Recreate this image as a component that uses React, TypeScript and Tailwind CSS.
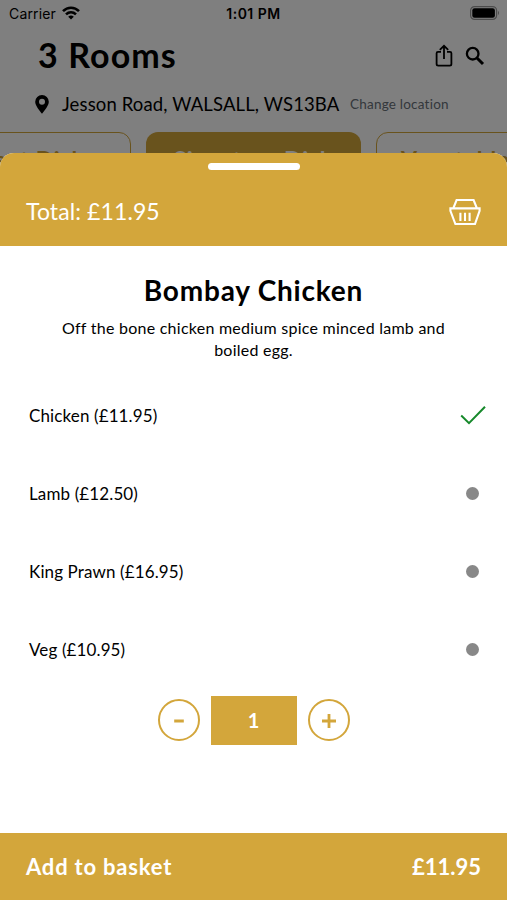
import React, { useState } from 'react'

interface Option {
  name: string
  price: string
}

const options: Option[] = [
  { name: 'Chicken', price: '11.95' },
  { name: 'Lamb', price: '12.50' },
  { name: 'King Prawn', price: '16.95' },
  { name: 'Veg', price: '10.95' },
]

const StatusBar = () => (
  <div className="flex h-7 items-center px-[9px] font-['Inter',sans-serif] text-[14px] leading-none">
    <div className="flex flex-1 items-center gap-[6px]">
      <span className="tracking-[0.15px]">Carrier</span>
      <svg className="-mt-[2px]" width="18" height="14" viewBox="0 0 18 14" fill="none" stroke="#000" strokeWidth="2.6">
        <path d="M1 5.2C5.6 .6 12.4 .6 17 5.2" />
        <path d="M4 8.4C6.9 5.7 11.1 5.7 14 8.4" />
        <path d="M9 13.6 6.2 10.8Q9 8.4 11.8 10.8Z" fill="#000" stroke="none" />
      </svg>
    </div>
    <span className="font-semibold tracking-[0.5px]">1:01 PM</span>
    <div className="flex flex-1 justify-end">
      <svg className="-mr-[2px] -mt-[2px]" width="30" height="14" viewBox="0 0 30 14">
        <rect x=".6" y=".6" width="26" height="12.8" rx="4" fill="none" stroke="#000" strokeOpacity=".4" strokeWidth="1.2" />
        <rect x="2.3" y="2.3" width="22.6" height="9.4" rx="2.2" />
        <path d="M28 4.8Q30 7 28 9.2Z" opacity=".4" />
      </svg>
    </div>
  </div>
)

const Header = () => (
  <div className="flex h-[55px] items-center pl-[38px] pr-[22px]">
    <h1 className="flex-1 pb-[2px] text-[34px] font-bold leading-none tracking-[1.1px]">3 Rooms</h1>
    <svg className="mr-[12px]" width="18" height="24" viewBox="0 0 18 24" fill="none" stroke="#000" strokeWidth="1.8">
      <path d="M6 7.8H3Q1.6 7.8 1.6 9.2V20Q1.6 21.6 3.2 21.6H14.8Q16.4 21.6 16.4 20V9.2Q16.4 7.8 15 7.8H12" />
      <path d="M9 15V2M4.8 5.8 9 1.8 13.2 5.8" />
    </svg>
    <svg width="20" height="20" viewBox="0 0 20 20" fill="none" stroke="#000">
      <circle cx="7.7" cy="7.7" r="5.8" strokeWidth="2.3" />
      <path d="M12 12 18 18" strokeWidth="3" />
    </svg>
  </div>
)

const LocationRow = () => (
  <div className="flex h-[49px] items-center whitespace-nowrap pb-[6px] pl-[35px]">
    <svg className="mr-[13px]" width="14" height="19" viewBox="0 0 14 19">
      <path fillRule="evenodd" d="M7 0A6.8 6.8 0 0 1 13.8 6.8C13.8 10.6 9.6 15.5 7 18.8C4.4 15.5 .2 10.6 .2 6.8A6.8 6.8 0 0 1 7 0ZM7 3.8A3 3 0 1 0 7 9.8A3 3 0 1 0 7 3.8Z" />
    </svg>
    <span className="w-[288px] text-[18.5px] tracking-[0.13px]">Jesson Road, WALSALL, WS13BA</span>
    <span className="text-[13.5px] tracking-[0.22px] text-[#687078]">Change location</span>
  </div>
)

const Categories = () => (
  <div className="-ml-[84px] flex w-[675px] gap-[15px] whitespace-nowrap text-[23px] font-bold tracking-[0.8px]">
    <div className="flex h-[56px] w-[215px] items-center justify-center rounded-xl border-[1.5px] border-[#d3a63b] pb-[2px] text-[#d3a63b]">
      Sweet Dish
    </div>
    <div className="flex h-[56px] w-[215px] items-center justify-center rounded-xl bg-[#d3a63b] pb-[2px] text-white">
      Signature Dish
    </div>
    <div className="flex h-[56px] w-[215px] items-center justify-center rounded-xl border-[1.5px] border-[#d3a63b] pb-[2px] text-[#d3a63b]">
      Vegetable Dish
    </div>
  </div>
)

const BasketIcon = () => (
  <svg width="32" height="28" viewBox="0 0 32 28" fill="none" stroke="#fff" strokeWidth="2.1">
    <path d="M4.4 10 7.6 2H24.6L27.8 10" />
    <path d="M1.4 10.4H30.6V12.8L26 26H6.4L1.4 12.8Z" />
    <path d="M11.4 14.8V23M16 14.8V23M20.6 14.8V23" />
  </svg>
)

const roundButton = 'flex h-[42px] w-[42px] items-center justify-center rounded-full border-2 border-[#d3a63b]'

export default function App() {
  const [selected, setSelected] = useState(0)
  const [quantity, setQuantity] = useState(1)
  const total = (Number(options[selected].price) * quantity).toFixed(2)

  return (
    <div className="relative h-[900px] w-[507px] overflow-hidden bg-white font-['Lato',sans-serif] text-black">
      <StatusBar />
      <Header />
      <LocationRow />
      <Categories />

      {/* Dimmed backdrop */}
      <div className="absolute inset-0 bg-black/50" />

      {/* Bottom sheet */}
      <div className="absolute inset-x-0 bottom-0 top-[153px] flex flex-col overflow-hidden rounded-t-[14px] bg-white">
        <div className="flex h-[93px] shrink-0 flex-col bg-[#d3a63b] text-white">
          <div className="mx-auto mt-[10px] h-[7px] w-[92px] rounded-full bg-white" />
          <div className="flex flex-1 items-center justify-between pl-[26px] pr-[26px] pt-[8px]">
            <span className="pb-[2px] text-[23px] tracking-[0.1px]">Total: £{total}</span>
            <BasketIcon />
          </div>
        </div>

        <div className="flex flex-1 flex-col items-center">
          <h2 className="mt-[26px] text-[28px] font-bold leading-[36px] tracking-[0.8px]">Bombay Chicken</h2>
          <p className="mt-[9px] w-[400px] text-center text-[16px] leading-[22px] tracking-[0.25px]">
            Off the bone chicken medium spice minced lamb and boiled egg.
          </p>

          <ul className="mt-[15px] w-full pl-[29px] pr-[21px]">
            {options.map((option, i) => (
              <li
                key={option.name}
                onClick={() => setSelected(i)}
                className="flex h-[78.2px] cursor-pointer items-center justify-between text-[17px] tracking-[0.12px]"
              >
                <span className="pt-px">
                  {option.name} (£{option.price})
                </span>
                {i === selected ? (
                  <svg width="26" height="20" viewBox="0 0 26 20" fill="none" stroke="#16892b" strokeWidth="2">
                    <path d="M1.2 10.5 9 18.2 25 1.8" />
                  </svg>
                ) : (
                  <span className="mr-[7px] h-[13px] w-[13px] rounded-full bg-[#888]" />
                )}
              </li>
            ))}
          </ul>

          <div className="mt-[7px] flex items-center gap-[11px] text-[#d3a63b]">
            <button className={roundButton} onClick={() => setQuantity(Math.max(1, quantity - 1))}>
              <svg width="16" height="16" viewBox="0 0 16 16" stroke="currentColor" strokeWidth="3">
                <path d="M3.2 9H12.8" />
              </svg>
            </button>
            <div className="flex h-[49px] w-[86px] items-center justify-center bg-[#d3a63b] text-[20px] font-bold text-white">
              {quantity}
            </div>
            <button className={roundButton} onClick={() => setQuantity(quantity + 1)}>
              <svg width="16" height="16" viewBox="0 0 16 16" stroke="currentColor" strokeWidth="2.8">
                <path d="M1 9H15M8 2V16" />
              </svg>
            </button>
          </div>
        </div>

        <div className="flex h-[67px] shrink-0 items-center justify-between bg-[#d3a63b] px-[26px] pb-[1px] text-[22px] font-bold text-white">
          <span className="tracking-[0.8px]">Add to basket</span>
          <span>£{total}</span>
        </div>
      </div>
    </div>
  )
}
